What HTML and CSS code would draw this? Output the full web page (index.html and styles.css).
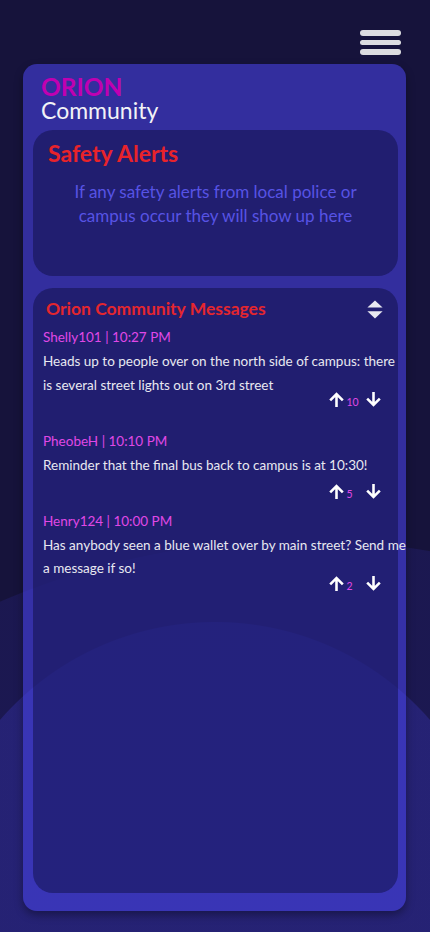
FILE: index.html
```html
<!DOCTYPE html>
<html lang="en">
<head>
<meta charset="utf-8">
<meta name="viewport" content="width=device-width, initial-scale=1">
<title>Orion Community</title>
<link rel="stylesheet" href="styles.css">
</head>
<body>
  <div class="topbar">
    <button class="menu" aria-label="Menu">
      <span class="menu-bar"></span>
      <span class="menu-bar"></span>
      <span class="menu-bar"></span>
    </button>
  </div>

  <main class="card">
    <header class="brand">
      <div class="brand-name">ORION</div>
      <div class="brand-sub">Community</div>
    </header>

    <section class="panel alerts">
      <h2 class="alerts-title">Safety Alerts</h2>
      <p class="alerts-empty">If any safety alerts from local police or campus occur they will show up here</p>
    </section>

    <section class="panel messages">
      <div class="messages-head">
        <h2 class="messages-title">Orion Community Messages</h2>
        <svg class="sort-icon" viewBox="0 0 16 19" aria-hidden="true">
          <path d="M8 0.6 L15.6 7.6 H0.4 Z"/>
          <path d="M0.4 11.2 H15.6 L8 18.4 Z"/>
        </svg>
      </div>

      <article class="msg">
        <div class="msg-meta">Shelly101 | 10:27 PM</div>
        <p class="msg-text">Heads up to people over on the north side of campus: there is several street lights out on 3rd street</p>
        <div class="votes">
          <svg class="vote-arrow" viewBox="0 0 14 14" aria-hidden="true"><path d="M7 14 V2.2 M1.1 7.8 L7 1.9 L12.9 7.8"/></svg>
          <span class="vote-count">10</span>
          <svg class="vote-arrow" viewBox="0 0 14 14" aria-hidden="true"><path d="M7 0 V11.8 M1.1 6.2 L7 12.1 L12.9 6.2"/></svg>
        </div>
      </article>

      <article class="msg msg-short">
        <div class="msg-meta">PheobeH | 10:10 PM</div>
        <p class="msg-text">Reminder that the final bus back to campus is at 10:30!</p>
        <div class="votes">
          <svg class="vote-arrow" viewBox="0 0 14 14" aria-hidden="true"><path d="M7 14 V2.2 M1.1 7.8 L7 1.9 L12.9 7.8"/></svg>
          <span class="vote-count">5</span>
          <svg class="vote-arrow" viewBox="0 0 14 14" aria-hidden="true"><path d="M7 0 V11.8 M1.1 6.2 L7 12.1 L12.9 6.2"/></svg>
        </div>
      </article>

      <article class="msg">
        <div class="msg-meta">Henry124 | 10:00 PM</div>
        <p class="msg-text">Has anybody seen a blue wallet over by main street? Send me a message if so!</p>
        <div class="votes">
          <svg class="vote-arrow" viewBox="0 0 14 14" aria-hidden="true"><path d="M7 14 V2.2 M1.1 7.8 L7 1.9 L12.9 7.8"/></svg>
          <span class="vote-count">2</span>
          <svg class="vote-arrow" viewBox="0 0 14 14" aria-hidden="true"><path d="M7 0 V11.8 M1.1 6.2 L7 12.1 L12.9 6.2"/></svg>
        </div>
      </article>
    </section>
  </main>
</body>
</html>
```

FILE: styles.css
```css
* {
  box-sizing: border-box;
}

html,
body {
  height: 100%;
}

body {
  margin: 0;
  min-height: 932px;
  font-family: Lato, "Noto Sans", "Liberation Sans", sans-serif;
  color: #ececf4;
  background:
    radial-gradient(circle 285px at 215px 907px, rgba(52, 48, 165, 0.42) 284.5px, transparent 285.5px),
    radial-gradient(circle 760px at 300px 1300px, rgba(45, 40, 150, 0.24) 759.5px, transparent 760.5px),
    #16133b;
  display: flex;
  flex-direction: column;
}

.topbar {
  display: flex;
  justify-content: flex-end;
  padding: 30px 29px 0 0;
}

.menu {
  display: flex;
  flex-direction: column;
  gap: 4px;
  width: 41px;
  padding: 0;
  margin: 0;
  border: 0;
  background: none;
}

.menu-bar {
  display: block;
  height: 5.7px;
  border-radius: 3px;
  background: #dcdce0;
}

.card {
  margin: 9px 24px 0 23px;
  height: 847px;
  padding: 10px 8px 18px 10px;
  border-radius: 14px;
  background: rgba(71, 66, 228, 0.59);
  box-shadow: 0 4px 8px rgba(0, 0, 0, 0.35);
  display: flex;
  flex-direction: column;
}

.brand {
  padding-left: 8px;
}

.brand-name {
  font-size: 24.5px;
  line-height: 25px;
  font-weight: 700;
  color: #c000b2;
}

.brand-sub {
  font-size: 23px;
  line-height: 23px;
  color: #f2f2f6;
}

.panel {
  border-radius: 20px;
  background: rgba(10, 10, 55, 0.45);
}

.alerts {
  margin-top: 8px;
  height: 146px;
  padding: 9px 15px 0 15px;
}

.alerts-title {
  margin: 0;
  font-size: 23px;
  line-height: 28px;
  font-weight: 700;
  color: #e8232b;
}

.alerts-empty {
  margin: 13px 0 0 0;
  font-size: 17px;
  line-height: 24px;
  text-align: center;
  color: #5753e4;
}

.messages {
  margin-top: 12px;
  flex: 1;
  padding: 10px 0 0 10px;
}

.messages-head {
  display: flex;
  align-items: center;
  justify-content: space-between;
  padding: 0 15px 0 3px;
  margin-bottom: 7px;
}

.messages-title {
  margin: 0;
  font-size: 17.5px;
  line-height: 22px;
  font-weight: 700;
  color: #e4262e;
}

.sort-icon {
  width: 16px;
  height: 19px;
  fill: #e8e8f0;
}

.msg {
  margin-bottom: 24px;
}

.msg-meta {
  font-size: 13.5px;
  line-height: 20px;
  color: #e048e6;
}

.msg-text {
  margin: 3px -8px 0 0;
  font-size: 13.5px;
  line-height: 23.5px;
  color: #e8e8f0;
}

.votes {
  display: flex;
  justify-content: flex-end;
  align-items: flex-end;
  height: 15px;
  margin-top: -5px;
  padding-right: 17px;
}

.msg-short {
  margin-bottom: 12px;
}

.msg-short .votes {
  margin-top: 6px;
}

.vote-arrow {
  width: 15px;
  height: 15px;
  fill: none;
  stroke: #ffffff;
  stroke-width: 2.4;
}

.vote-count {
  width: 22px;
  padding-left: 2.5px;
  font-size: 10.5px;
  line-height: 10px;
  color: #e048e6;
}
```
